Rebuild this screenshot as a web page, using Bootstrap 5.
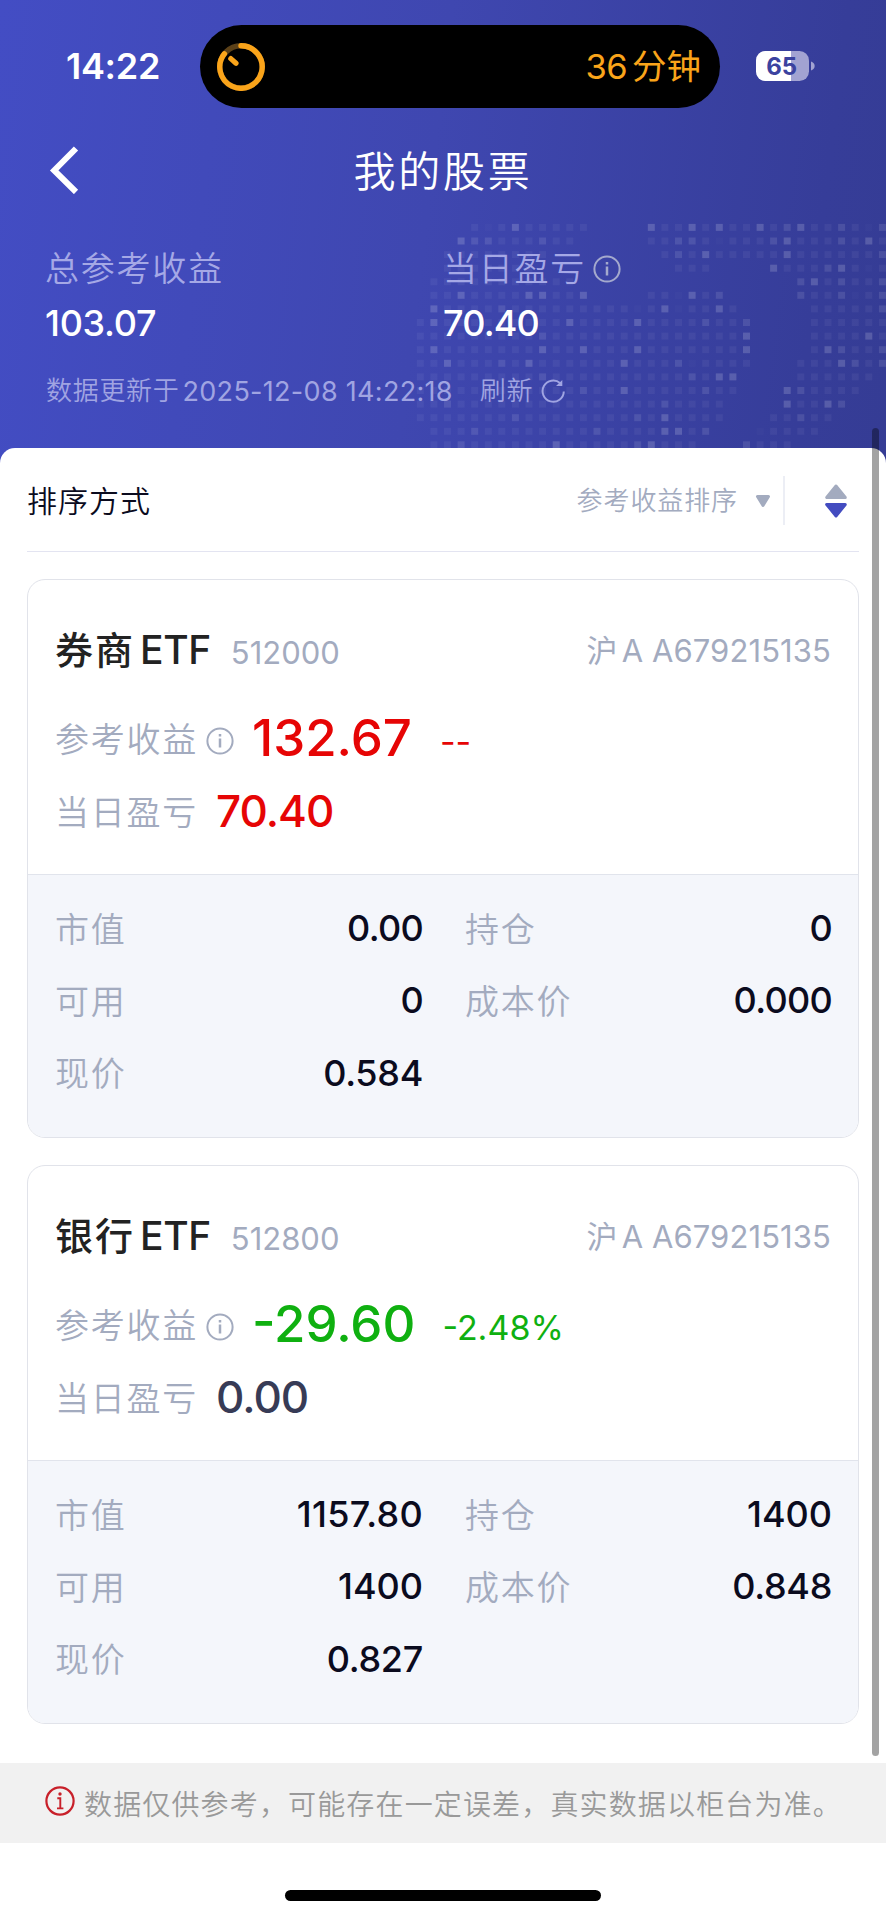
<!DOCTYPE html>
<html lang="zh-CN">
<head>
<meta charset="utf-8">
<meta name="viewport" content="width=device-width, initial-scale=1">
<title>我的股票</title>
<link href="https://cdn.jsdelivr.net/npm/bootstrap@5.3.0/dist/css/bootstrap.min.css" rel="stylesheet">
<style>
  body { font-family: Inter, "Noto Sans CJK SC", sans-serif; color: #0b0b1e; background: #fff; overflow: hidden; }
  .screen { width: 886px; height: 1920px; }
  .ln { line-height: 1; white-space: nowrap; }
  .muted { color: #a3abbf; }

  /* blue header */
  .hero { height: 470px; background: linear-gradient(97deg, #434dc4 0%, #3f47b0 48%, #363d99 90%, #353c94 100%); color: #fff; }
  .hero-dots { left: 400px; top: 200px; width: 486px; height: 260px; }
  .status { height: 132px; }
  .clock { width: 200px; padding-left: 66px; font-size: 36px; font-weight: 600; letter-spacing: -.3px; }
  .island { width: 520px; height: 83px; margin-top: 25px; border-radius: 42px; background: #000; color: #faa41a; padding: 0 19px 0 17px; }
  .mins { font-size: 34.5px; letter-spacing: -.6px; padding-top: 2px; }
  .mins span { letter-spacing: 0; margin-left: 5px; }
  .batt { width: 166px; padding-left: 36px; }
  .titlebar { height: 76px; }
  .titlebar .ln { font-size: 42px; letter-spacing: 2.8px; font-weight: 350; padding-top: 3px; }
  .side { width: 120px; padding-left: 49px; }
  .lab { font-size: 34px; letter-spacing: 1.75px; font-weight: 350; }
  .hero .lab { color: #a5a8e6; height: 40px; line-height: 40px; }
  .sum { height: 40px; line-height: 40px; font-size: 36px; font-weight: 500; margin-top: 14px; letter-spacing: -.3px; }
  .upd { color: #a0a4e2; font-size: 26px; padding-left: 46px; height: 34px; margin-top: 31px; font-weight: 350; letter-spacing: .7px; }
  .upd .d { font-size: 27px; letter-spacing: .3px; font-weight: 400; margin-left: 3px; }

  /* white sheet */
  .sheet { height: 1315px; margin-top: -22px; padding: 0 27px; border-radius: 15px 15px 0 0; background: #fff; }
  .sortbar { height: 104px; border-bottom: 1.5px solid #e3e4f1; padding-top: 2px; }
  .sortbar .k { font-size: 30px; letter-spacing: 1px; font-weight: 350; }
  .sortbar .v { font-size: 26px; letter-spacing: .9px; font-weight: 350; }
  .vr2 { width: 2px; height: 49px; background: #eceef5; }
  .stock { height: 559px; border: 1.5px solid #e1e3ea; border-radius: 18px; overflow: hidden; }
  .stock .top { height: 295px; padding: 0 27px 0 27px; border-bottom: 1.5px solid #e1e4ec; }
  .nm { height: 70px; margin-top: 34px; }
  .nm .n { font-size: 38px; letter-spacing: 2px; font-weight: 500; color: #222; }
  .nm .e { font-size: 39px; letter-spacing: -.4px; margin-left: 5px; }
  .nm .c { font-size: 31px; }
  .nm .acct { padding-top: 3px; letter-spacing: .1px; }
  .r2 { height: 74px; margin-top: 16px; }
  .r2 .lab { padding-top: 5px; }
  .r3 .lab, .cell .lab { padding-top: 3px; }
  .r3 { height: 74px; }
  .big { font-size: 51px; font-weight: 500; }
  .mid { font-size: 44px; font-weight: 500; letter-spacing: -1px; }
  .pct { font-size: 34px; padding-top: 9px; }
  .up { color: #e60505; } .down { color: #0fb010; } .flat { color: #373b56; }
  .stock .grid { flex: 1; background: #f4f6fb; padding: 17px 26px 0 27px; }
  .cell { height: 72.3px; font-size: 36px; font-weight: 500; }
  .cell.a { width: 368px; } .cell.b { width: 367px; }
  .zs { letter-spacing: -.7px; }
  .zn { letter-spacing: -.3px; }

  .notice { height: 80px; background: #f1f1f1; color: #999; padding-left: 45px; font-size: 28px; letter-spacing: 1.15px; font-weight: 350; }
  .notice .ln { padding-top: 3px; }
  .home { width: 316px; height: 11px; border-radius: 6px; background: #000; margin-top: 47px; }
  .thumb { left: 872px; top: 428px; width: 7px; height: 1328px; border-radius: 4px; background: rgba(0,0,0,.36); }
</style>
</head>
<body>
<div class="screen position-relative d-flex flex-column">
  <header class="hero position-relative flex-shrink-0">
    <svg class="hero-dots position-absolute" id="dots" viewBox="0 0 486 260"></svg>
    <div class="position-relative">
      <div class="status d-flex">
        <div class="clock ln d-flex align-items-center">14:22</div>
        <div class="island d-flex align-items-center justify-content-between">
          <svg width="48" height="48" viewBox="0 0 48 48" fill="none" stroke="#faa41a" stroke-width="5.4" stroke-linecap="round">
            <circle cx="24" cy="24" r="21.2" stroke="#5c4118"/>
            <path d="M24 2.8A21.2 21.2 0 1 1 7.4 10.8"/>
            <path d="M13.8 15.6l5.2 4.6" stroke-width="5.2"/>
          </svg>
          <div class="mins ln">36<span>分钟</span></div>
        </div>
        <div class="batt d-flex align-items-center">
          <svg width="60" height="30" viewBox="0 0 60 30">
            <clipPath id="bc"><rect width="53" height="30" rx="9.5"/></clipPath>
            <g clip-path="url(#bc)"><rect width="53" height="30" fill="#a2a3d2"/><rect width="35" height="30" fill="#fff"/></g>
            <path d="M55 10.5c2.2.6 3.7 2.4 3.7 4.5s-1.5 3.9-3.7 4.5z" fill="#a2a3d2"/>
            <text x="25.7" y="23.6" text-anchor="middle" font-size="24" font-weight="700" fill="#3b429f" font-family="Inter">65</text>
          </svg>
        </div>
      </div>
      <div class="titlebar d-flex align-items-center justify-content-between">
        <div class="side"><svg width="30" height="48" viewBox="0 0 30 48" fill="none" stroke="#fff" stroke-width="6"><path d="M27 2.5L5.2 24.5 27 46"/></svg></div>
        <div class="ln">我的股票</div>
        <div class="side"></div>
      </div>
      <div class="d-flex" style="padding:41px 0 0 45px">
        <div style="width:398px">
          <div class="lab ln">总参考收益</div>
          <div class="sum ln">103.07</div>
        </div>
        <div>
          <div class="d-flex align-items-center">
            <div class="lab ln">当日盈亏</div>
            <svg style="margin-left:7px" width="28" height="28" viewBox="0 0 28 28" fill="none" stroke="#a4a9cd" stroke-width="2"><circle cx="14" cy="14" r="12.6"/><path d="M14 11.5v9M14 7v2.6" stroke-width="2.5"/></svg>
          </div>
          <div class="sum ln" style="letter-spacing:-.8px">70.40</div>
        </div>
      </div>
      <div class="upd ln d-flex align-items-center">
        <span>数据更新于</span><span class="d">2025-12-08 14:22:18</span><span style="margin-left:27px">刷新</span>
        <svg style="margin-left:8px" width="25" height="25" viewBox="0 0 25 25" fill="none" stroke="#a0a4e2" stroke-width="2"><path d="M19.3 4.3A10.6 10.6 0 1 0 22.8 12.5"/><path d="M21.3 1v6h-6.3z" fill="#a0a4e2" stroke="none"/></svg>
      </div>
    </div>
  </header>

  <main class="sheet position-relative flex-shrink-0">
    <div class="sortbar d-flex align-items-center">
      <div class="k ln">排序方式</div>
      <div class="v ln muted ms-auto">参考收益排序</div>
      <svg style="margin-left:17px" width="16" height="14" viewBox="0 0 16 14"><path d="M2.5 2.5h11L8 11.5z" fill="#a3abbf" stroke="#a3abbf" stroke-width="3" stroke-linejoin="round"/></svg>
      <div class="vr2" style="margin-left:12px"></div>
      <svg style="margin-left:39px;margin-right:11px" width="24" height="36" viewBox="0 0 24 36"><g stroke-width="3" stroke-linejoin="round"><path d="M12 3L2.7 14.5h18.6z" fill="#a3abbf" stroke="#a3abbf"/><path d="M2.7 21.5h18.6L12 33z" fill="#434cc0" stroke="#434cc0"/></g></svg>
    </div>

    <section class="stock d-flex flex-column" style="margin-top:27px">
      <div class="top">
        <div class="nm d-flex align-items-center justify-content-between">
          <div class="d-flex align-items-baseline"><span class="n ln">券商<span class="e">ETF</span></span><span class="c ln muted" style="margin-left:20px">512000</span></div>
          <div class="c acct ln muted">沪<span class="ms-1">A A679215135</span></div>
        </div>
        <div class="r2 d-flex align-items-center">
          <span class="lab ln muted">参考收益</span>
          <svg style="margin:8px 18px 0 8px" width="28" height="28" viewBox="0 0 28 28" fill="none" stroke="#a3abbf" stroke-width="2"><circle cx="14" cy="14" r="12.6"/><path d="M14 11.5v9M14 7v2.6" stroke-width="2.5"/></svg>
          <span class="big ln up">132.67</span><span class="pct ln up" style="margin-left:28px">--</span>
        </div>
        <div class="r3 d-flex align-items-center"><span class="lab ln muted">当日盈亏</span><span class="mid ln up" style="margin-left:18px">70.40</span></div>
      </div>
      <div class="grid">
        <div class="d-flex flex-wrap">
          <div class="cell a d-flex align-items-center justify-content-between"><span class="lab ln muted">市值</span><span class="zs ln">0.00</span></div>
          <div class="cell b d-flex align-items-center justify-content-between ms-auto"><span class="lab ln muted">持仓</span><span class="zs ln">0</span></div>
          <div class="cell a d-flex align-items-center justify-content-between"><span class="lab ln muted">可用</span><span class="zs ln">0</span></div>
          <div class="cell b d-flex align-items-center justify-content-between ms-auto"><span class="lab ln muted">成本价</span><span class="zs ln">0.000</span></div>
          <div class="cell a d-flex align-items-center justify-content-between"><span class="lab ln muted">现价</span><span class="zn ln">0.584</span></div>
        </div>
      </div>
    </section>

    <section class="stock d-flex flex-column" style="margin-top:27px">
      <div class="top">
        <div class="nm d-flex align-items-center justify-content-between">
          <div class="d-flex align-items-baseline"><span class="n ln">银行<span class="e">ETF</span></span><span class="c ln muted" style="margin-left:20px">512800</span></div>
          <div class="c acct ln muted">沪<span class="ms-1">A A679215135</span></div>
        </div>
        <div class="r2 d-flex align-items-center">
          <span class="lab ln muted">参考收益</span>
          <svg style="margin:8px 18px 0 8px" width="28" height="28" viewBox="0 0 28 28" fill="none" stroke="#a3abbf" stroke-width="2"><circle cx="14" cy="14" r="12.6"/><path d="M14 11.5v9M14 7v2.6" stroke-width="2.5"/></svg>
          <span class="big ln down">-29.60</span><span class="pct ln down" style="margin-left:27px">-2.48%</span>
        </div>
        <div class="r3 d-flex align-items-center"><span class="lab ln muted">当日盈亏</span><span class="mid ln flat" style="margin-left:18px">0.00</span></div>
      </div>
      <div class="grid">
        <div class="d-flex flex-wrap">
          <div class="cell a d-flex align-items-center justify-content-between"><span class="lab ln muted">市值</span><span class="ln" style="letter-spacing:.3px">1157.80</span></div>
          <div class="cell b d-flex align-items-center justify-content-between ms-auto"><span class="lab ln muted">持仓</span><span class="ln">1400</span></div>
          <div class="cell a d-flex align-items-center justify-content-between"><span class="lab ln muted">可用</span><span class="ln">1400</span></div>
          <div class="cell b d-flex align-items-center justify-content-between ms-auto"><span class="lab ln muted">成本价</span><span class="zn ln">0.848</span></div>
          <div class="cell a d-flex align-items-center justify-content-between"><span class="lab ln muted">现价</span><span class="zn ln">0.827</span></div>
        </div>
      </div>
    </section>
  </main>

  <footer class="flex-shrink-0">
    <div class="notice d-flex align-items-center">
      <svg class="flex-shrink-0" style="margin:-5px 9px 0 0" width="30" height="30" viewBox="0 0 30 30" fill="none" stroke="#c8202a" stroke-width="2.2"><circle cx="15" cy="15" r="13.6"/><path d="M12.3 12.3h3v10M12 22.4h6.4" stroke-width="1.9"/><circle cx="15" cy="8" r="1.7" fill="#c8202a" stroke="none"/></svg>
      <span class="ln">数据仅供参考，可能存在一定误差，真实数据以柜台为准。</span>
    </div>
    <div class="home mx-auto"></div>
  </footer>
  <div class="thumb position-absolute"></div>
</div>
<script src="https://cdn.jsdelivr.net/npm/bootstrap@5.3.0/dist/js/bootstrap.bundle.min.js"></script>
<script>
  // world-map dot matrix: each digit is the brightness of one square
  const rows = [
    "....212422222....422424224234223213",
    "...433222322.....223321222342223242",
    "..22222222........23242222242222223",
    "..2222222..........222....422234212",
    ".22222222222................3423223",
    ".224222244224....221423.....3223123",
    ".42222322222222212412242.....222223",
    "2422222222242222422223223....222222",
    "2222222223222222222222224....222242",
    "2422222224224222422222224....243223",
    "2242223242222224222312222...2224323",
    "222222222322222222223244....222222.",
    "222222222222322422222322...432222..",
    "22322222222222222232222....42243...",
    "22222223222222223242222...22322....",
    ".222322222222322224423...12222.....",
    ".22322222242222234222...3222......."
  ];
  const alpha = [0, .02, .05, .105, .17];
  let out = "";
  rows.forEach((r, j) => [...r].forEach((c, i) => {
    if (c !== ".") out += `<rect x="${(16.8 + i * 13.59).toFixed(1)}" y="${(23.9 + j * 13.59).toFixed(1)}" width="7" height="7" fill="#fff" fill-opacity="${alpha[c]}"/>`;
  }));
  document.getElementById("dots").innerHTML = out;
</script>
</body>
</html>
